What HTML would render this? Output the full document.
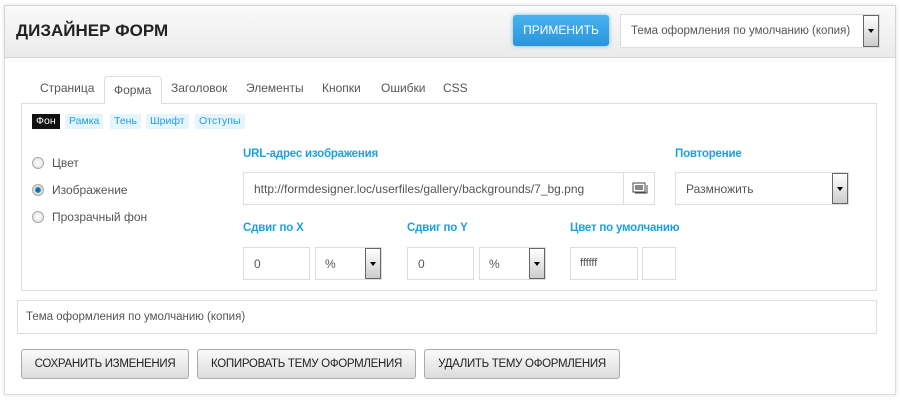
<!DOCTYPE html>
<html><head><meta charset="utf-8"><style>
*{box-sizing:border-box;margin:0;padding:0}
body{width:900px;height:401px;background:#fff;font-family:"Liberation Sans",Arial,sans-serif;position:relative;overflow:hidden;font-size:12px;color:#555}
.a{position:absolute}
#panel{left:4px;top:5px;width:892px;height:390px;border:1px solid #ddd;box-shadow:0 0 4px rgba(0,0,0,.12);background:#fff}
#hdr{left:4px;top:5px;width:892px;height:53px;background:linear-gradient(#fafafa,#ebebeb);border:1px solid #d4d4d4}
h1{position:absolute;left:16px;top:21px;font-size:17px;font-weight:bold;color:#222;letter-spacing:0}
.btnb{left:513px;top:15px;width:96px;height:31px;border-radius:3px;background:linear-gradient(#48b3ee,#2a95dc);color:#fff;font-size:12px;text-align:center;line-height:31px;box-shadow:0 0 4px rgba(40,150,220,.6)}
.inp{background:#fff;border:1px solid #ddd}
.sel{font-size:12px;color:#555}
.arr{position:absolute;right:0;top:0;bottom:0;width:16px;border:1px solid #666;background:linear-gradient(#fff,#ccc)}
.arr:after{content:"";position:absolute;left:4px;top:50%;margin-top:-2px;border:3px solid transparent;border-top:4px solid #000}
.tab{top:81px;font-size:12px;color:#555}
.sub{top:114px;height:15px;line-height:15px;font-size:10.5px;padding:0 4px;background:#e6f5fd;color:#1ea0e0}
.lbl{color:#1ea0e0;font-weight:bold;font-size:11.5px;letter-spacing:-0.2px}
.rad{width:12px;height:12px;border-radius:50%;border:1px solid #aaa;background:radial-gradient(#fff,#ddd)}
.btn{top:349px;height:30px;border:1px solid #aaa;border-radius:3px;background:linear-gradient(#fafafa,#dcdcdc);color:#222;font-size:11.5px;letter-spacing:-0.3px;text-align:center;line-height:28px}
</style></head><body>
<div class="a" id="panel"></div>
<div class="a" id="hdr"></div>
<h1>ДИЗАЙНЕР ФОРМ</h1>
<div class="a btnb">ПРИМЕНИТЬ</div>
<div class="a inp" style="left:620px;top:14px;width:260px;height:34px"><span class="a sel" style="left:10px;top:10px;font-size:11.5px">Тема оформления по умолчанию (копия)</span><div class="arr"></div></div>

<div class="a" style="left:21px;top:103px;width:856px;height:188px;border:1px solid #ddd"></div>
<div class="a" style="left:104px;top:76px;width:58px;height:28px;border:1px solid #ddd;border-bottom:none;border-radius:4px 4px 0 0;background:#fff"></div>
<span class="a tab" style="left:40px">Страница</span>
<span class="a tab" style="left:114px;top:83px">Форма</span>
<span class="a tab" style="left:171px">Заголовок</span>
<span class="a tab" style="left:246px">Элементы</span>
<span class="a tab" style="left:322px">Кнопки</span>
<span class="a tab" style="left:381px">Ошибки</span>
<span class="a tab" style="left:443px">CSS</span>

<span class="a sub" style="left:32px;background:#111;color:#fff">Фон</span>
<span class="a sub" style="left:65px">Рамка</span>
<span class="a sub" style="left:110px">Тень</span>
<span class="a sub" style="left:146px">Шрифт</span>
<span class="a sub" style="left:195px">Отступы</span>

<div class="a rad" style="left:32px;top:157px"></div><span class="a" style="left:52px;top:156px">Цвет</span>
<div class="a rad" style="left:32px;top:184px;background:radial-gradient(#0a5d9a 0,#1b7fc4 35%,#ddd 45%)"></div><span class="a" style="left:52px;top:183px">Изображение</span>
<div class="a rad" style="left:32px;top:211px"></div><span class="a" style="left:52px;top:210px">Прозрачный фон</span>

<span class="a lbl" style="left:243px;top:148px">URL-адрес изображения</span>
<div class="a inp" style="left:243px;top:172px;width:412px;height:33px"><span class="a" style="left:10px;top:9px">http://formdesigner.loc/userfiles/gallery/backgrounds/7_bg.png</span>
<div class="a" style="left:379px;top:0;width:1px;height:31px;background:#ddd"></div>
<svg class="a" style="left:388px;top:8px" width="16" height="14"><rect x="1" y="2" width="12" height="9" fill="#fff" stroke="#444"/><rect x="3" y="4" width="8" height="5" fill="#888"/><path d="M3 12h12V4" stroke="#444" fill="none"/></svg></div>

<span class="a lbl" style="left:675px;top:148px">Повторение</span>
<div class="a inp" style="left:675px;top:172px;width:174px;height:33px"><span class="a" style="left:10px;top:9px">Размножить</span><div class="arr"></div></div>

<span class="a lbl" style="left:243px;top:222px">Сдвиг по X</span>
<div class="a inp" style="left:243px;top:247px;width:67px;height:33px"><span class="a" style="left:10px;top:9px">0</span></div>
<div class="a inp" style="left:315px;top:247px;width:67px;height:33px"><span class="a" style="left:9px;top:9px">%</span><div class="arr"></div></div>
<span class="a lbl" style="left:407px;top:222px">Сдвиг по Y</span>
<div class="a inp" style="left:407px;top:247px;width:67px;height:33px"><span class="a" style="left:10px;top:9px">0</span></div>
<div class="a inp" style="left:479px;top:247px;width:67px;height:33px"><span class="a" style="left:9px;top:9px">%</span><div class="arr"></div></div>
<span class="a lbl" style="left:570px;top:222px">Цвет по умолчанию</span>
<div class="a inp" style="left:570px;top:247px;width:68px;height:33px"><span class="a" style="left:9px;top:9px;font-size:11px">ffffff</span></div>
<div class="a inp" style="left:642px;top:247px;width:34px;height:33px"></div>

<div class="a" style="left:17px;top:300px;width:860px;height:34px;border:1px solid #ddd"><span class="a" style="left:8px;top:10px;font-size:11.5px">Тема оформления по умолчанию (копия)</span></div>

<div class="a btn" style="left:21px;width:168px">СОХРАНИТЬ ИЗМЕНЕНИЯ</div>
<div class="a btn" style="left:197px;width:219px">КОПИРОВАТЬ ТЕМУ ОФОРМЛЕНИЯ</div>
<div class="a btn" style="left:424px;width:196px">УДАЛИТЬ ТЕМУ ОФОРМЛЕНИЯ</div>
</body></html>
